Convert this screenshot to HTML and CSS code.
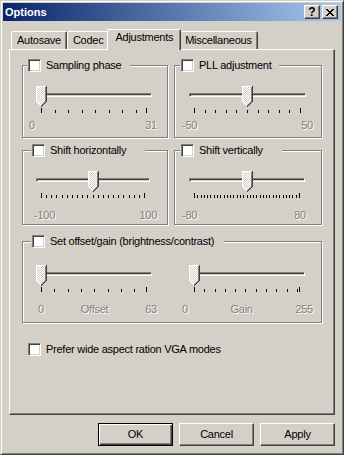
FILE: index.html
```html
<!DOCTYPE html>
<html lang="en">
<head>
<meta charset="utf-8">
<title>Options</title>
<link rel="stylesheet" href="styles.css">
</head>
<body>
<svg class="defs" width="0" height="0" aria-hidden="true">
  <defs>
    <pattern id="dither" width="2" height="2" patternUnits="userSpaceOnUse">
      <rect width="2" height="2" fill="#d4d0c8"/>
      <rect width="1" height="1" fill="#ffffff"/>
      <rect x="1" y="1" width="1" height="1" fill="#ffffff"/>
    </pattern>
    <symbol id="thumb" viewBox="0 0 11 21">
      <polygon points="1,1 9,1 9,16 5,20 1,16" fill="url(#dither)" shape-rendering="crispEdges"/>
      <g shape-rendering="crispEdges">
        <rect x="0" y="0" width="10" height="1" fill="#fff"/>
        <rect x="0" y="0" width="1" height="16" fill="#fff"/>
        <rect x="1" y="16" width="1" height="1" fill="#fff"/>
        <rect x="2" y="17" width="1" height="1" fill="#fff"/>
        <rect x="3" y="18" width="1" height="1" fill="#fff"/>
        <rect x="4" y="19" width="1" height="1" fill="#fff"/>
        <rect x="10" y="0" width="1" height="16" fill="#404040"/>
        <rect x="9" y="16" width="1" height="1" fill="#404040"/>
        <rect x="8" y="17" width="1" height="1" fill="#404040"/>
        <rect x="7" y="18" width="1" height="1" fill="#404040"/>
        <rect x="6" y="19" width="1" height="1" fill="#404040"/>
        <rect x="5" y="20" width="1" height="1" fill="#404040"/>
        <rect x="9" y="1" width="1" height="15" fill="#808080"/>
        <rect x="8" y="16" width="1" height="1" fill="#808080"/>
        <rect x="7" y="17" width="1" height="1" fill="#808080"/>
        <rect x="6" y="18" width="1" height="1" fill="#808080"/>
        <rect x="5" y="19" width="1" height="1" fill="#808080"/>
      </g>
    </symbol>
  </defs>
</svg>

<div class="window">
  <div class="titlebar">
    <span class="title">Options</span>
    <div class="cap-btns">
      <span class="cap-btn help">?</span>
      <span class="cap-btn">
        <svg width="8" height="7" viewBox="0 0 8 7" shape-rendering="crispEdges">
          <path d="M0 0h2v1H0zM6 0h2v1H6zM1 1h2v1H1zM5 1h2v1H5zM2 2h4v1H2zM3 3h2v1H3zM2 4h4v1H2zM1 5h2v1H1zM5 5h2v1H5zM0 6h2v1H0zM6 6h2v1H6z" fill="#000"/>
        </svg>
      </span>
    </div>
  </div>

  <div class="client">
    <div class="tabs">
      <div class="tab">Autosave</div>
      <div class="tab">Codec</div>
      <div class="tab active">Adjustments</div>
      <div class="tab">Miscellaneous</div>
    </div>

    <div class="panel">
      <div class="grid">
        <div class="group g-top">
          <div class="head head-samp"><span class="cb"></span><span>Sampling phase</span></div>
          <div class="tbwrap tbw-samp">
            <div class="tb" data-min="0" data-max="31" data-step="4" data-val="0">
              <div class="track"></div>
              <svg class="thumb" width="11" height="21"><use href="#thumb"/></svg>
            </div>
            <div class="tb-labels"><span>0</span><span>31</span></div>
          </div>
        </div>

        <div class="group g-top">
          <div class="head head-pll"><span class="cb"></span><span>PLL adjustment</span></div>
          <div class="tbwrap tbw-pll">
            <div class="tb" data-min="-50" data-max="50" data-step="10" data-val="0">
              <div class="track"></div>
              <svg class="thumb" width="11" height="21"><use href="#thumb"/></svg>
            </div>
            <div class="tb-labels"><span>-50</span><span>50</span></div>
          </div>
        </div>

        <div class="group g-mid">
          <div class="head head-hor"><span class="cb"></span><span>Shift horizontally</span></div>
          <div class="tbwrap tbw-hor">
            <div class="tb" data-min="-100" data-max="100" data-step="10" data-val="0">
              <div class="track"></div>
              <svg class="thumb" width="11" height="21"><use href="#thumb"/></svg>
            </div>
            <div class="tb-labels"><span>-100</span><span>100</span></div>
          </div>
        </div>

        <div class="group g-mid">
          <div class="head head-ver"><span class="cb"></span><span>Shift vertically</span></div>
          <div class="tbwrap tbw-ver">
            <div class="tb" data-min="-80" data-max="80" data-step="5" data-val="0">
              <div class="track"></div>
              <svg class="thumb" width="11" height="21"><use href="#thumb"/></svg>
            </div>
            <div class="tb-labels"><span>-80</span><span>80</span></div>
          </div>
        </div>
      </div>

      <div class="group g-bot wide">
        <div class="head head-off"><span class="cb"></span><span>Set offset/gain (brightness/contrast)</span></div>
        <div class="pair">
          <div class="tbwrap tbw-off">
            <div class="tb" data-min="0" data-max="63" data-step="8" data-val="0">
              <div class="track"></div>
              <svg class="thumb" width="11" height="21"><use href="#thumb"/></svg>
            </div>
            <div class="tb-labels"><span>0</span><span>Offset</span><span>63</span></div>
          </div>
          <div class="tbwrap tbw-gain">
            <div class="tb" data-min="0" data-max="255" data-step="25" data-val="0">
              <div class="track"></div>
              <svg class="thumb" width="11" height="21"><use href="#thumb"/></svg>
            </div>
            <div class="tb-labels"><span>0</span><span>Gain</span><span>255</span></div>
          </div>
        </div>
      </div>

      <div class="check-row"><span class="cb"></span><span>Prefer wide aspect ration VGA modes</span></div>
    </div>

    <div class="buttons">
      <button class="btn default" type="button">OK</button>
      <button class="btn" type="button">Cancel</button>
      <button class="btn" type="button">Apply</button>
    </div>
  </div>
</div>
<script src="script.js"></script>
</body>
</html>
```

FILE: styles.css
```css
* { box-sizing: border-box; }

html, body { margin: 0; padding: 0; }

body {
  background: #d4d0c8;
  color: #000;
  font-family: "Liberation Sans", Arial, sans-serif;
  font-size: 11px;
  line-height: 13px;
  letter-spacing: -0.25px;
}

.defs { position: absolute; width: 0; height: 0; overflow: hidden; }

/* window frame */
.window {
  width: 344px;
  height: 455px;
  padding: 2px;
  background: #d4d0c8;
  border: 1px solid;
  border-color: #d4d0c8 #404040 #404040 #d4d0c8;
  box-shadow: inset 1px 1px #fff, inset -1px -1px #808080;
}

.titlebar {
  height: 18px;
  display: flex;
  align-items: center;
  padding: 0 3px 0 2px;
  background: linear-gradient(to right, #0a246a, #a6caf0);
}

.title {
  flex: 1;
  color: #fff;
  font-weight: bold;
  letter-spacing: 0;
}

.cap-btns { display: flex; gap: 2px; }

.cap-btn {
  width: 16px;
  height: 14px;
  display: flex;
  align-items: center;
  justify-content: center;
  background: #d4d0c8;
  border: 1px solid;
  border-color: #fff #404040 #404040 #fff;
  box-shadow: inset -1px -1px #808080;
}

.cap-btn.help {
  font-weight: bold;
  font-size: 12px;
  letter-spacing: 0;
  padding-top: 1px;
}

.client { padding: 8px 6px 0; }

/* tabs */
.tabs {
  display: flex;
  align-items: flex-end;
  height: 20px;
  padding-left: 2px;
}

.tab {
  height: 18px;
  padding: 2px 5px 0;
  border: 1px solid;
  border-bottom: none;
  border-color: #fff #404040 #404040 #fff;
  border-radius: 2px 2px 0 0;
  box-shadow: inset -1px 0 #808080;
  background: #d4d0c8;
  white-space: nowrap;
}

.tab.active {
  position: relative;
  z-index: 1;
  height: 21px;
  margin: 0 -2px -1px;
  padding: 1px 7px 0;
}

.panel {
  height: 366px;
  padding: 15px 0 0 12px;
  border: 1px solid;
  border-color: #fff #404040 #404040 #fff;
  box-shadow: inset -1px -1px #808080;
}

.grid {
  display: grid;
  grid-template-columns: 146px 148px;
  column-gap: 6px;
  row-gap: 12px;
}

/* group boxes */
.group {
  border: 1px solid #808080;
  box-shadow: inset 1px 1px #fff, 1px 1px #fff;
}

.group.wide { width: 300px; margin-top: 16px; }

.head {
  display: flex;
  align-items: center;
  gap: 5px;
  height: 13px;
  margin-top: -7px;
  padding-left: 1px;
  background: #d4d0c8;
  white-space: nowrap;
}

.head-samp { width: 103px; margin-left: 4px; }
.head-pll  { width: 99px;  margin-left: 5px; }
.head-hor  { width: 114px; margin-left: 8px; }
.head-ver  { width: 102px; margin-left: 5px; }
.head-off  { width: 193px; margin-left: 8px; }

.cb {
  flex: none;
  width: 13px;
  height: 13px;
  background: #fff;
  border: 1px solid;
  border-color: #808080 #fff #fff #808080;
  box-shadow: inset 1px 1px #404040, inset -1px -1px #d4d0c8;
}

/* trackbars */
.tb { position: relative; height: 28px; }

.track {
  position: absolute;
  top: 7px;
  left: 0;
  right: 0;
  height: 4px;
  border: 1px solid;
  border-color: #808080 #fff #fff #808080;
  box-shadow: inset 1px 1px #404040, inset -1px -1px #d4d0c8;
}

.thumb { position: absolute; top: 0; left: 0; display: block; }

.tick {
  position: absolute;
  top: 24px;
  width: 1px;
  height: 3px;
  background: #000;
}

.tick.end { top: 22px; height: 5px; }

.tb-labels {
  display: flex;
  justify-content: space-between;
  color: #808080;
  text-shadow: 1px 1px #fff;
}

.g-top { padding-bottom: 5px; }
.g-top .tb { margin-top: 14px; }
.g-top .tb-labels { margin-top: 5px; }

.g-mid { padding-bottom: 2px; }
.g-mid .tb { margin-top: 14px; }
.g-mid .tb-labels { margin-top: 10px; }

.g-bot { padding-bottom: 6px; }
.g-bot .tb { margin-top: 17px; }
.g-bot .tb-labels { margin-top: 10px; }

.pair { display: flex; }

.tbw-samp { width: 116px; margin-left: 13px; }
.tbw-samp .tb-labels { margin: 5px -5px 0 -7px; }

.tbw-pll { width: 117px; margin-left: 14px; }
.tbw-pll .tb-labels { margin: 5px -7px 0 -7px; }

.tbw-hor { width: 114px; margin-left: 13px; }
.tbw-hor .tb-labels { margin: 10px -7px 0 -2px; }

.tbw-ver { width: 116px; margin-left: 14px; }
.tbw-ver .tb-labels { margin: 10px -1px 0 -7px; }

.tbw-off { width: 116px; margin-left: 13px; }
.tbw-off .tb-labels { margin: 10px -5px 0 2px; }

.tbw-gain { width: 116px; margin-left: 37px; }
.tbw-gain .tb-labels { margin: 10px -8px 0 -7px; }

/* bottom checkbox */
.check-row {
  display: flex;
  align-items: center;
  gap: 5px;
  height: 13px;
  margin: 20px 0 0 6px;
}

/* dialog buttons */
.buttons {
  display: flex;
  justify-content: flex-end;
  gap: 6px;
  margin-top: 8px;
}

.btn {
  width: 75px;
  height: 23px;
  padding: 0;
  font: inherit;
  letter-spacing: inherit;
  color: #000;
  background: #d4d0c8;
  border: 1px solid;
  border-color: #fff #404040 #404040 #fff;
  border-radius: 0;
  box-shadow: inset -1px -1px #808080;
}

.btn.default {
  border-color: #000;
  box-shadow: inset 1px 1px #fff, inset -1px -1px #404040, inset -2px -2px #808080;
}
```

FILE: script.js
```js
document.querySelectorAll('.tb').forEach(function (tb) {
  var min = +tb.dataset.min;
  var max = +tb.dataset.max;
  var step = +tb.dataset.step;
  var val = +tb.dataset.val;
  var span = tb.clientWidth - 11;
  function pos(v) { return Math.round(5 + (v - min) / (max - min) * span); }
  var vals = [];
  for (var v = min; v < max; v += step) vals.push(v);
  vals.push(max);
  vals.forEach(function (v, i) {
    var t = document.createElement('span');
    t.className = 'tick' + (i === 0 || i === vals.length - 1 ? ' end' : '');
    t.style.left = pos(v) + 'px';
    tb.appendChild(t);
  });
  var th = tb.querySelector('.thumb');
  th.style.left = (pos(val) - 5) + 'px';
  tb.appendChild(th);
});
```
